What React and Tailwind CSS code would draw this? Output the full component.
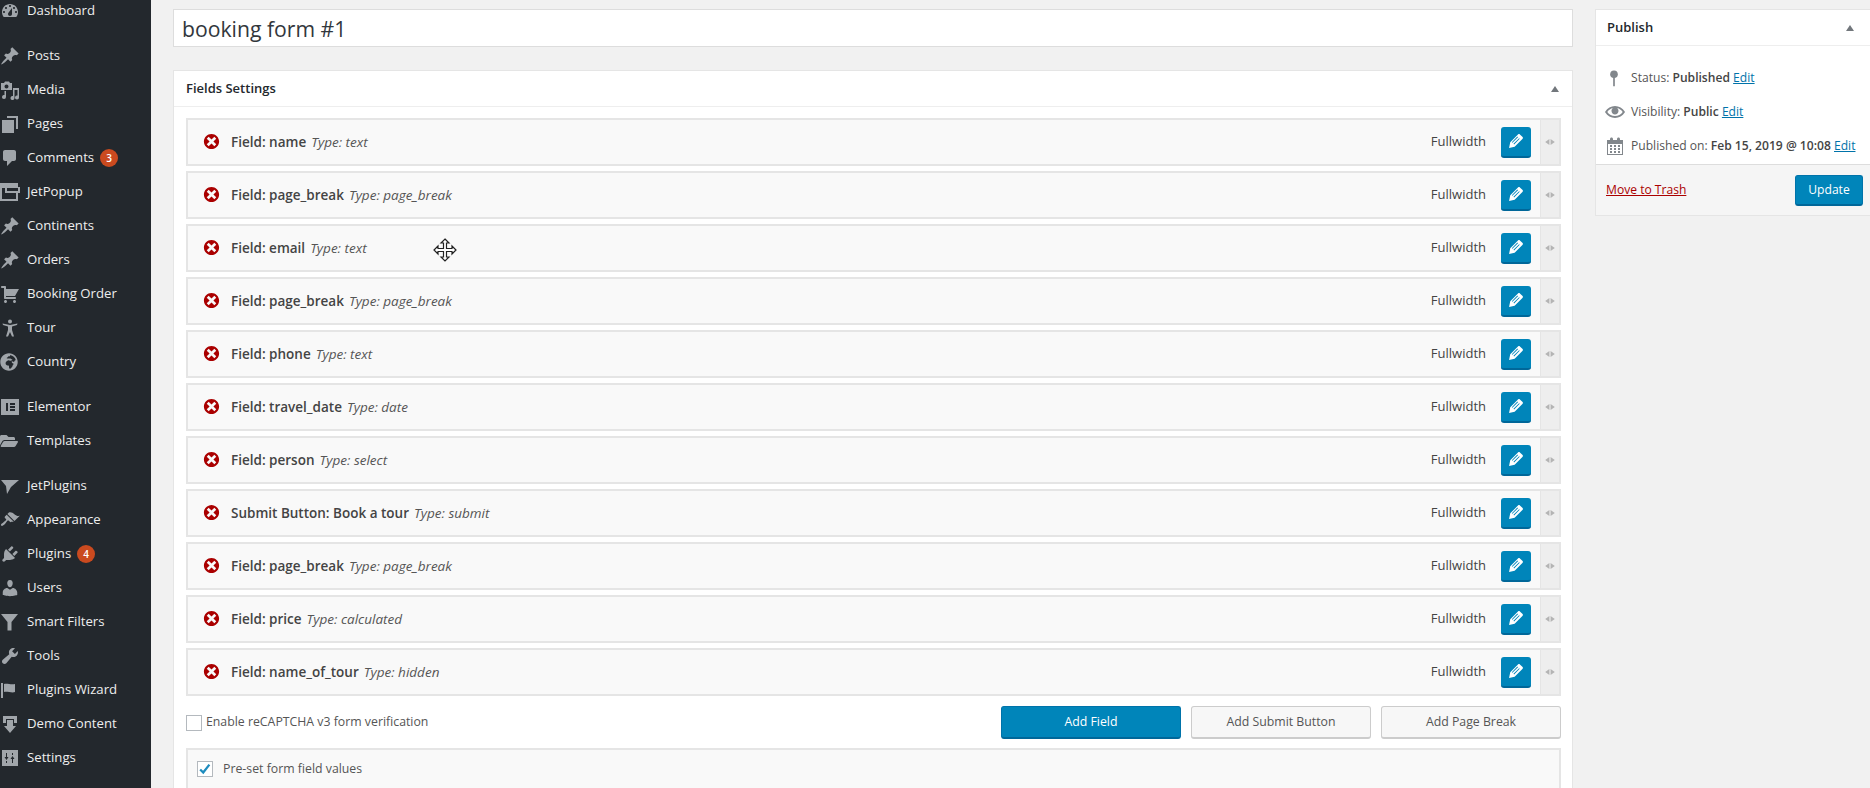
import React from 'react';
import { FaGlobeAfrica, FaFolderOpen } from 'react-icons/fa';

const PIN = 'M10.44 3.02l1.82-1.82 6.36 6.35-1.83 1.82c-1.05-.68-2.48-.57-3.41.36l-.75.75c-.92.93-1.04 2.35-.35 3.41l-1.83 1.82-2.41-2.41-2.8 2.79c-.42.42-3.38 2.71-3.8 2.29s1.86-3.39 2.28-3.81l2.79-2.79L4.1 9.36l1.83-1.82c1.05.69 2.48.57 3.4-.36l.75-.75c.93-.92 1.05-2.35.36-3.41z';

const paths = {
    dashboard: 'M3.76 16h12.48c1.1-1.37 1.76-3.11 1.76-5 0-4.42-3.58-8-8-8s-8 3.58-8 8c0 1.89.66 3.63 1.76 5zM10 4c.55 0 1 .45 1 1s-.45 1-1 1-1-.45-1-1 .45-1 1-1zM6 6c.55 0 1 .45 1 1s-.45 1-1 1-1-.45-1-1 .45-1 1-1zm8 0c.55 0 1 .45 1 1s-.45 1-1 1-1-.45-1-1 .45-1 1-1zm-5.37 5.55L12 7v6c0 1.1-.9 2-2 2s-2-.9-2-2c0-.57.24-1.08.63-1.45zM4 10c.55 0 1 .45 1 1s-.45 1-1 1-1-.45-1-1 .45-1 1-1zm12 0c.55 0 1 .45 1 1s-.45 1-1 1-1-.45-1-1 .45-1 1-1z',
    pin: PIN,
    media: 'M1 3h3l1-1.5h4L10 3h2v7H1zM6.5 4.5a2 2 0 1 0 0 4 2 2 0 0 0 0-4zM13 8h6v9.5a2 2 0 1 1-1.5-1.9V10h-3v8a2 2 0 1 1-1.5-1.9zM6 11v6a2 2 0 1 1-1.5-1.9V11z',
    pages: 'M7 2h11v13h-2V4H7zM2 6h12v13H2z',
    comments: 'M5 2h9c1.1 0 2 .9 2 2v7c0 1.1-.9 2-2 2h-2l-5 5v-5H5c-1.100 0-2-.9-2-2V4c0-1.100.9-2 2-2z',
    popup: 'M0 1h18v4h2v6h-2v8H0zM2 6v11h14v-6H5V6zM7 6v3h11V6z',
    cart: 'M6 13h9c.55 0 1 .45 1 1s-.45 1-1 1H5c-.55 0-1-.45-1-1V4H2c-.55 0-1-.45-1-1s.45-1 1-1h3c.55 0 1 .45 1 1v2h13l-4 7H6v1zm-.5 3c.83 0 1.5.67 1.5 1.5S6.33 19 5.5 19 4 18.33 4 17.5 4.67 16 5.5 16zm9 0c.83 0 1.5.67 1.5 1.500s-.67 1.500-1.500 1.500-1.500-.67-1.500-1.500.67-1.500 1.500-1.500z',
    tour: 'M10 1.500a2 2 0 1 1 0 4 2 2 0 0 1 0-4zM3 7l-.5-1.500L10 7l7.500-1.500L17 7l-5 1.500V12l2 6.500h-2L10 14l-2 4.500H6L8 12V8.500z',
    elementor: 'M1 2h18v16H1zM6 6v8h2V6zM10 6v2h5V6zM10 9v2h5V9zM10 12v2h5v-2z',
    jet: 'M1 4h18l-8 7-4 7-1-8z',
    appearance: 'M14.48 11.06L7.41 3.99l1.5-1.500c.5-.56 2.300-.47 3.510.32 1.210.8 1.430 1.280 2.910 2.100 1.180.64 2.450 1.260 4.450.85zm-.71.71L6.700 4.700 4.930 6.470c-.39.39-.39 1.020 0 1.410l1.060 1.060c.39.39.39 1.030 0 1.420-.6.6-1.430 1.110-2.210 1.690-.35.26-.7.53-1.010.84C1.430 13.230.4 14.810 1.200 15.600c.79.8 2.370-.23 3.710-1.570.31-.31.58-.66.85-1.020.57-.78 1.080-1.610 1.690-2.210.39-.39 1.020-.39 1.410 0l1.060 1.060c.39.39 1.020.39 1.410 0z',
    plugins: 'M13.11 4.360L9.870 7.600 8 5.730l3.240-3.240c.35-.34 1.050-.2 1.560.32.52.51.66 1.210.31 1.550zm-8 1.770l.91-1.120 9.010 9.010-1.190.84c-.71.71-2.630 1.160-3.820 1.160H6.140L4.900 17.260c-.59.59-1.540.59-2.120 0-.59-.58-.59-1.530 0-2.120l1.240-1.240v-3.880c0-1.130.4-3.190 1.090-3.890zm7.260 3.970l3.240-3.240c.34-.35 1.040-.21 1.550.31.52.51.66 1.210.31 1.550l-3.240 3.250z',
    users: 'M10 9.250c-2.270 0-2.730-3.440-2.730-3.440C7 4.020 7.820 2 9.970 2c2.160 0 2.980 2.020 2.710 3.810 0 0-.41 3.440-2.680 3.440zm0 2.570L12.720 10c2.390 0 4.520 2.330 4.520 4.530v2.490s-3.650 1.130-7.240 1.130c-3.650 0-7.240-1.130-7.240-1.130v-2.490c0-2.250 1.940-4.480 4.470-4.480z',
    filter: 'M1 2h17l-6.500 8v8.500h-4V10z',
    tools: 'M16.680 9.770c-1.340 1.340-3.300 1.670-4.950.99l-5.410 6.520c-.99.99-2.590.99-3.580 0s-.99-2.590 0-3.570l6.520-5.420c-.68-1.650-.35-3.610.99-4.950 1.280-1.280 3.120-1.620 4.720-1.060l-2.890 2.890 2.820 2.820 2.860-2.870c.53 1.580.18 3.390-1.080 4.650z',
    flag: 'M1 18V3h2v15zm3-6V4c3-1 7 1 11 0v8c-3 1.270-8-1-11 0z',
    demo: 'M3 2h14v7h-3V5H6v4H3zM7 6h6v6h3l-6 7-6-7h3z',
    settings: 'M2 2h16v16H2zM6 5v4H4.500L6.500 12 8.500 9H7V5zM6 13v2h1v-2zM13 15v-4h1.500l-2-3-2 3H12v4zM12 7h1V5h-1z',
};

const menuGroups = [
    [{ label: 'Dashboard', icon: 'dashboard' }],
    [
        { label: 'Posts', icon: 'pin' },
        { label: 'Media', icon: 'media' },
        { label: 'Pages', icon: 'pages' },
        { label: 'Comments', icon: 'comments', badge: 3 },
        { label: 'JetPopup', icon: 'popup' },
        { label: 'Continents', icon: 'pin' },
        { label: 'Orders', icon: 'pin' },
        { label: 'Booking Order', icon: 'cart' },
        { label: 'Tour', icon: 'tour' },
        { label: 'Country', icon: 'globe' },
    ],
    [
        { label: 'Elementor', icon: 'elementor' },
        { label: 'Templates', icon: 'folder' },
    ],
    [
        { label: 'JetPlugins', icon: 'jet' },
        { label: 'Appearance', icon: 'appearance' },
        { label: 'Plugins', icon: 'plugins', badge: 4 },
        { label: 'Users', icon: 'users' },
        { label: 'Smart Filters', icon: 'filter' },
        { label: 'Tools', icon: 'tools' },
        { label: 'Plugins Wizard', icon: 'flag' },
        { label: 'Demo Content', icon: 'demo' },
        { label: 'Settings', icon: 'settings' },
    ],
];

const fields = [
    ['Field: name', 'Type: text'],
    ['Field: page_break', 'Type: page_break'],
    ['Field: email', 'Type: text'],
    ['Field: page_break', 'Type: page_break'],
    ['Field: phone', 'Type: text'],
    ['Field: travel_date', 'Type: date'],
    ['Field: person', 'Type: select'],
    ['Submit Button: Book a tour', 'Type: submit'],
    ['Field: page_break', 'Type: page_break'],
    ['Field: price', 'Type: calculated'],
    ['Field: name_of_tour', 'Type: hidden'],
];

const Dash = ({ d, size = 20, className = '' }) => (
    <svg viewBox="0 0 20 20" width={size} height={size} fill="currentColor" fillRule="evenodd" className={className}>
        <path d={d} />
    </svg>
);

const MenuIcon = ({ name }) => {
    if (name === 'globe') return <FaGlobeAfrica size={18} />;
    if (name === 'folder') return <FaFolderOpen size={18} />;
    return <Dash d={paths[name]} />;
};

const Sidebar = () => (
    <div className="w-[151px] shrink-0 bg-[#23282d] -mt-[6px] pb-[40px] flex flex-col gap-[11px]">
        {menuGroups.map((group, i) => (
            <div key={i} className="flex flex-col">
                {group.map((item) => (
                    <div key={item.label} className="flex items-center h-[34px] text-[13.200px] text-[#eeeeee]">
                        <span className="w-[27px] shrink-0 flex justify-start text-[#a0a5aa]">
                            <MenuIcon name={item.icon} />
                        </span>
                        <span>{item.label}</span>
                        {item.badge && (
                            <span className="ml-[6px] w-[18px] h-[18px] rounded-full bg-[#ca4a1f] text-white text-[10px] font-semibold flex items-center justify-center">
                                {item.badge}
                            </span>
                        )}
                    </div>
                ))}
            </div>
        ))}
    </div>
);

const FieldRow = ({ title, type }) => (
    <div className="flex h-[48px] border-2 border-[#e5e5e5] bg-[#f9f9f9] text-[13.500px] text-[#444444]">
        <div className="flex-1 flex items-center pl-[14px]">
            <Dash d="M10 2c4.420 0 8 3.580 8 8s-3.580 8-8 8-8-3.580-8-8 3.580-8 8-8zm5 11l-3-3 3-3-2-2-3 3-3-3-2 2 3 3-3 3 2 2 3-3 3 3z" size={19} className="text-[#aa0000] shrink-0 -mt-[1px]" />
            <span className="ml-[10px] font-semibold">{title}</span>
            <span className="ml-[5px] italic text-[#555555]">{type}</span>
        </div>
        <div className="flex items-center">
            <span className="text-[13px]">Fullwidth</span>
            <button className="ml-[15px] mr-[9px] w-[30px] h-[31px] rounded-[3px] bg-[#0085ba] border-b-2 border-[#006799] flex items-center justify-center text-white">
                <Dash d="M13.900 3.400l2.700 2.700c.46.46.42 1.240.03 1.640l-8 8-5.560 1.160 1.160-5.580 8-8c.39-.39 1.200-.4 1.670.07zM11.400 5.600L5.800 11.200l.6.6 5.600-5.600zM13.100 7.200L7.500 12.800l.6.6 5.600-5.600z" size={20} />
            </button>
        </div>
        <div className="w-[19px] bg-[#eeeeee] border-l border-[#e5e5e5] flex items-center justify-center text-[#b4b4b4]">
            <Dash d="M11 5l7 5-7 5zM9 5v10l-7-5z" size={12} />
        </div>
    </div>
);

const CheckBox = ({ checked }) => (
    <span className="w-[16px] h-[16px] shrink-0 border border-[#b4b9be] bg-white flex items-center justify-center text-[#1e8cbe]">
        {checked && (
            <svg viewBox="0 0 16 16" width="14" height="14" fill="none" stroke="currentColor" strokeWidth="2.600">
                <path d="M2.500 8.500l3.500 3.500 7-9" />
            </svg>
        )}
    </span>
);

const Arrow = () => (
    <span className="w-0 h-0 border-x-[4px] border-x-transparent border-b-[6px] border-b-[#72777c]" />
);

const AddButton = ({ children, primary }) => (
    <button
        className={`w-[180px] h-[33px] rounded-[3px] text-[12.300px] border border-b-2 ${
            primary
                ? 'bg-[#0085ba] border-[#0073aa] border-b-[#006799] text-white'
                : 'bg-[#f7f7f7] border-[#cccccc] text-[#555555]'
        }`}
    >
        {children}
    </button>
);

const FieldsBox = () => (
    <div className="mt-[23px] bg-white border border-[#e5e5e5]">
        <div className="h-[36px] pt-[1px] px-[12px] border-b border-[#eeeeee] flex items-center justify-between font-semibold text-[#23282d]">
            <span className="text-[13px]">Fields Settings</span>
            <span className="mr-[1px] flex"><Arrow /></span>
        </div>
        <div className="pl-[12px] pr-[11px] pt-[11px] pb-[60px]">
            <div className="flex flex-col gap-[5px]">
                {fields.map(([title, type], i) => (
                    <FieldRow key={i} title={title} type={type} />
                ))}
            </div>
            <div className="mt-[10px] h-[33px] flex items-center text-[12.300px] text-[#555555]">
                <CheckBox />
                <span className="ml-[4px]">Enable reCAPTCHA v3 form verification</span>
                <div className="ml-auto flex gap-[10px]">
                    <AddButton primary>Add Field</AddButton>
                    <AddButton>Add Submit Button</AddButton>
                    <AddButton>Add Page Break</AddButton>
                </div>
            </div>
            <div className="mt-[9px] h-[80px] border-2 border-[#e5e5e5] bg-[#f9f9f9] px-[9px] pt-[10px]">
                <div className="flex items-center text-[12.300px] text-[#555555]">
                    <CheckBox checked />
                    <span className="ml-[10px]">Pre-set form field values</span>
                </div>
            </div>
        </div>
    </div>
);

const PublishBox = () => (
    <div className="w-[285px] bg-white border border-[#e5e5e5] text-[12.100px] text-[#555555]">
        <div className="h-[36px] pt-[1px] pl-[11px] pr-[24px] border-b border-[#eeeeee] flex items-center justify-between">
            <span className="text-[13px] font-semibold text-[#23282d]">Publish</span>
            <span className="mr-[1px] flex"><Arrow /></span>
        </div>
        <div className="pt-[15px] pb-[1px] flex flex-col">
            <div className="h-[34px] flex items-center">
                <span className="w-[35px] pl-[13px] text-[#82878c]">
                    <svg viewBox="0 0 10 20" width="10" height="17" fill="currentColor">
                        <circle cx="5" cy="5" r="4.500" />
                        <path d="M4 8h2v11H4z" />
                    </svg>
                </span>
                <span>Status: <b className="font-semibold text-[#444444]">Published</b> <a className="text-[#0073aa] underline">Edit</a></span>
            </div>
            <div className="h-[34px] flex items-center">
                <span className="w-[35px] pl-[9px] text-[#82878c]">
                    <Dash d="M19.700 9.400C17.700 6 14 3.900 10 3.900S2.300 6 .3 9.400L0 10l.3.6c2 3.400 5.700 5.500 9.700 5.500s7.700-2.100 9.700-5.500l.3-.6-.3-.6zM10 14.100c-3.100 0-6-1.600-7.700-4.100C3.600 8 5.700 6.600 8 6.100c-.9.6-1.500 1.700-1.500 2.900 0 1.900 1.600 3.500 3.500 3.500s3.500-1.600 3.500-3.500c0-1.200-.6-2.300-1.500-2.900 2.300.5 4.400 1.900 5.700 3.900-1.700 2.500-4.600 4.100-7.700 4.100z" />
                </span>
                <span>Visibility: <b className="font-semibold text-[#444444]">Public</b> <a className="text-[#0073aa] underline">Edit</a></span>
            </div>
            <div className="h-[34px] flex items-center">
                <span className="w-[35px] pl-[9px] text-[#82878c]">
                    <Dash d="M15 4h3v15H2V4h3V3c0-.41.15-.76.44-1.060.29-.29.65-.44 1.060-.44s.77.15 1.060.44c.29.3.44.65.44 1.060v1h4V3c0-.41.15-.76.44-1.060.29-.29.65-.44 1.060-.44s.77.15 1.060.44c.29.3.44.65.44 1.060v1zM17 18V8H3v10zM7 9v2H5V9zM9 9h2v2H9zM13 11V9h2v2zM7 12v2H5v-2zM9 12h2v2H9zM13 14v-2h2v2zM7 15v2H5v-2zM11 17H9v-2h2zM15 17h-2v-2h2z" />
                </span>
                <span>Published on: <b className="font-semibold text-[#444444]">Feb 15, 2019 @ 10:08</b> <a className="text-[#0073aa] underline">Edit</a></span>
            </div>
        </div>
        <div className="h-[51px] bg-[#f5f5f5] border-t border-[#dddddd] pl-[10px] pr-[16px] flex items-center justify-between">
            <a className="text-[#aa0000] underline">Move to Trash</a>
            <button className="w-[68px] h-[31px] pt-[1px] rounded-[3px] bg-[#0085ba] border border-b-2 border-[#0073aa] border-b-[#006799] text-white">
                Update
            </button>
        </div>
    </div>
);

const MoveCursor = () => (
    <svg viewBox="0 0 24 24" width="24" height="24" className="absolute left-[433px] top-[238px]" fill="white" stroke="#222222" strokeWidth="1.200">
        <path d="M12 1l4 4h-2.500v5.500H19V8l4 4-4 4v-2.500h-5.500V19H16l-4 4-4-4h2.500v-5.500H5V16l-4-4 4-4v2.500h5.500V5H8z" />
    </svg>
);

export default function App() {
    return (
        <div className="relative flex w-[1870px] h-[788px] overflow-hidden bg-[#f1f1f1] font-['Open_Sans',sans-serif]">
            <Sidebar />
            <div className="flex-1 flex pl-[22px] pt-[9px]">
                <div className="w-[1400px] shrink-0">
                    <div className="h-[38px] pt-[2px] bg-white border border-[#dddddd] pl-[8px] flex items-center text-[21.200px] text-[#32373c]">
                        booking form #1
                    </div>
                    <FieldsBox />
                </div>
                <div className="ml-[22px]">
                    <PublishBox />
                </div>
            </div>
            <MoveCursor />
        </div>
    );
}
